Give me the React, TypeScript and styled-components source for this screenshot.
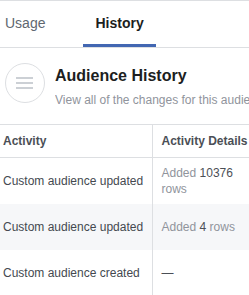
import * as React from 'react';
import styled, { createGlobalStyle } from 'styled-components';

const GlobalStyle = createGlobalStyle`
	html, body {
		margin: 0;
		padding: 0;
		background: #fff;
		overflow: hidden;
	}
	body {
		font-family: 'Liberation Sans', Arial, Helvetica, sans-serif;
		-webkit-font-smoothing: antialiased;
	}
`;

const Page = styled.div`
	width: 249px;
	height: 295px;
	overflow: hidden;
	border-top: 1px solid #dddfe2;
	box-sizing: border-box;
`;

const TabBar = styled.div`
	display: flex;
	gap: 26px;
	height: 46px;
	margin-left: -7px;
	border-bottom: 1px solid #dddfe2;
`;

const Tab = styled.div<{ $active?: boolean }>`
	display: flex;
	align-items: center;
	padding: 0 12px;
	box-sizing: border-box;
	font-size: 14px;
	font-weight: ${(p) => (p.$active ? 700 : 400)};
	color: ${(p) => (p.$active ? '#1c1e21' : '#606770')};
	border-bottom: 3px solid ${(p) => (p.$active ? '#4267b2' : 'transparent')};
	white-space: nowrap;
`;

const Header = styled.div`
	display: flex;
	align-items: flex-start;
	gap: 10px;
	padding: 15px 0 16px 5px;
	border-bottom: 1px solid #dddfe2;
`;

const IconCircle = styled.div`
	flex: none;
	width: 40px;
	height: 40px;
	border: 1px solid #dddfe2;
	border-radius: 50%;
	box-sizing: border-box;
	display: flex;
	align-items: center;
	justify-content: center;
`;

const HeaderText = styled.div`
	min-width: 0;
	flex: 1;
	overflow: hidden;
`;

const Title = styled.div`
	font-size: 16px;
	line-height: 20px;
	font-weight: 700;
	color: #1c1e21;
	margin-top: 3px;
	white-space: nowrap;
`;

const Subtitle = styled.div`
	font-size: 12px;
	line-height: 16px;
	color: #90949c;
	margin-top: 6px;
	white-space: nowrap;
`;

const Table = styled.table`
	border-collapse: collapse;
	table-layout: fixed;
	width: 260px;
`;

const HeadCell = styled.th<{ $first?: boolean }>`
	height: 32px;
	padding: 0 9px 0 ${(p) => (p.$first ? '3px' : '9px')};
	text-align: left;
	font-size: 12px;
	font-weight: 700;
	color: #4b4f56;
	border-bottom: 1px solid #dddfe2;
	border-right: ${(p) => (p.$first ? '1px solid #dddfe2' : 'none')};
	white-space: nowrap;
`;

const Row = styled.tr<{ $shaded?: boolean }>`
	background: ${(p) => (p.$shaded ? '#f6f7f9' : '#fff')};
`;

const Cell = styled.td<{ $first?: boolean }>`
	height: 46px;
	box-sizing: border-box;
	padding: 0 9px 0 ${(p) => (p.$first ? '3px' : '9px')};
	font-size: 12px;
	line-height: 16px;
	color: ${(p) => (p.$first ? '#444950' : '#90949c')};
	border-right: ${(p) => (p.$first ? '1px solid #dddfe2' : 'none')};
	vertical-align: middle;
	white-space: ${(p) => (p.$first ? 'nowrap' : 'normal')};
`;

const Count = styled.span`
	color: #4b4f56;
`;

const Dash = styled.span`
	color: #4b4f56;
`;

const MenuIcon = () => (
	<svg width="18" height="12" viewBox="0 0 18 12">
		<rect x="0" y="0" width="17" height="2" fill="#ccd0d5" />
		<rect x="0" y="5" width="17" height="2" fill="#ccd0d5" />
		<rect x="0" y="10" width="17" height="2" fill="#ccd0d5" />
	</svg>
);

interface HistoryRow {
	activity: string;
	count?: number;
}

const rows: Array<HistoryRow> = [
	{ activity: 'Custom audience updated', count: 10376 },
	{ activity: 'Custom audience updated', count: 4 },
	{ activity: 'Custom audience created' },
];

const App = () => {
	return (
		<Page>
			<GlobalStyle />
			<TabBar>
				<Tab>Usage</Tab>
				<Tab $active>History</Tab>
			</TabBar>
			<Header>
				<IconCircle>
					<MenuIcon />
				</IconCircle>
				<HeaderText>
					<Title>Audience History</Title>
					<Subtitle>View all of the changes for this audience</Subtitle>
				</HeaderText>
			</Header>
			<Table>
				<colgroup>
					<col style={{ width: 152 }} />
					<col style={{ width: 108 }} />
				</colgroup>
				<thead>
					<tr>
						<HeadCell $first>Activity</HeadCell>
						<HeadCell>Activity Details</HeadCell>
					</tr>
				</thead>
				<tbody>
					{rows.map((row, i) => (
						<Row key={i} $shaded={i % 2 === 1}>
							<Cell $first>{row.activity}</Cell>
							<Cell>
								{row.count !== undefined ? (
									<>
										Added <Count>{row.count}</Count> rows
									</>
								) : (
									<Dash>—</Dash>
								)}
							</Cell>
						</Row>
					))}
				</tbody>
			</Table>
		</Page>
	);
};

export default App;
